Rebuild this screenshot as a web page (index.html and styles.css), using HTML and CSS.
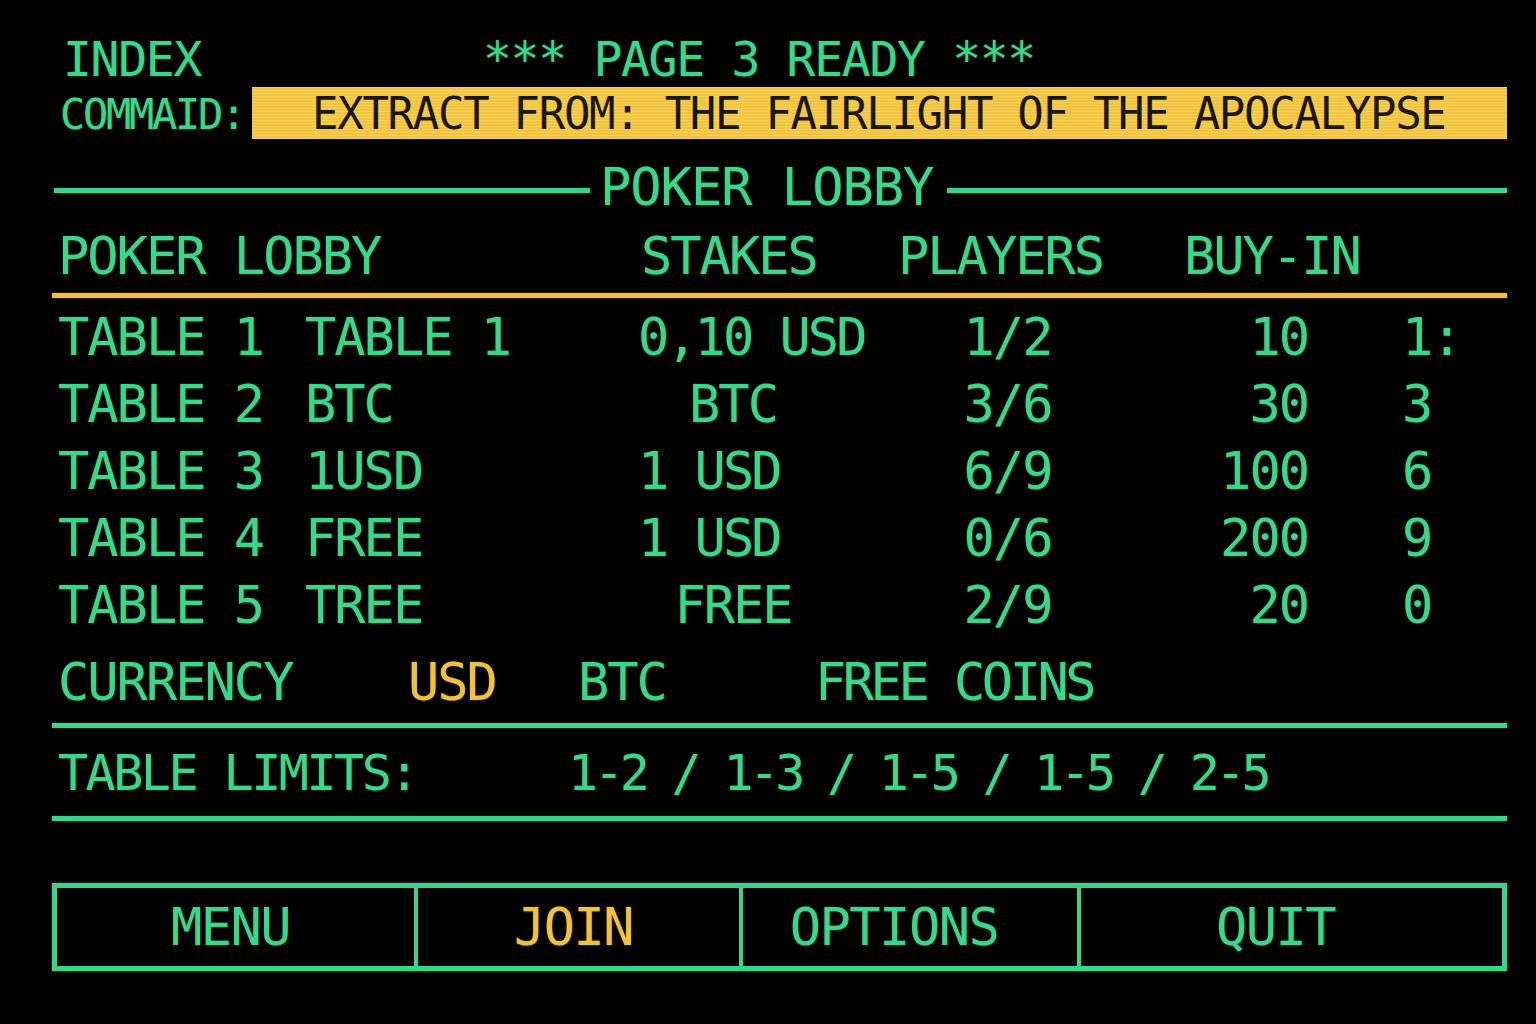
FILE: index.html
```html
<html lang="en">
  <head>
    <meta charset="UTF-8" />
    <meta name="viewport" content="width=device-width, initial-scale=1.0" />
    <title>Poker Lobby</title>

    <link rel="stylesheet" href="styles.css">
  </head>

  <body>
    <div class="screen">
      <div class="topLine">
        <span class="index">INDEX</span>
        <span class="pageTitle">*** PAGE 3 READY ***</span>
      </div>

      <div class="commandLine">
        <span class="commandLabel">COMMAID:</span>
        <div class="commandBar">EXTRACT FROM: THE FAIRLIGHT OF THE APOCALYPSE</div>
      </div>

      <div class="divider">
        <div class="rule ruleLeft"></div>
        <span class="dividerTitle">POKER LOBBY</span>
        <div class="rule ruleRight"></div>
      </div>

      <div class="headerRow">
        <span>POKER LOBBY</span>
        <span>STAKES</span>
        <span>PLAYERS</span>
        <span>BUY-IN</span>
      </div>
      <div class="rule yellowRule"></div>

      <div class="tableList">
        <div class="tableRow">
          <span>TABLE 1</span>
          <span>TABLE 1</span>
          <span class="stakes stakesLeft">0,10 USD</span>
          <span class="players">1/2</span>
          <span class="buyIn">10</span>
          <span class="seats">1:</span>
        </div>
        <div class="tableRow">
          <span>TABLE 2</span>
          <span>BTC</span>
          <span class="stakes">BTC</span>
          <span class="players">3/6</span>
          <span class="buyIn">30</span>
          <span class="seats">3</span>
        </div>
        <div class="tableRow">
          <span>TABLE 3</span>
          <span>1USD</span>
          <span class="stakes stakesLeft">1 USD</span>
          <span class="players">6/9</span>
          <span class="buyIn">100</span>
          <span class="seats">6</span>
        </div>
        <div class="tableRow">
          <span>TABLE 4</span>
          <span>FREE</span>
          <span class="stakes stakesLeft">1 USD</span>
          <span class="players">0/6</span>
          <span class="buyIn">200</span>
          <span class="seats">9</span>
        </div>
        <div class="tableRow">
          <span>TABLE 5</span>
          <span>TREE</span>
          <span class="stakes">FREE</span>
          <span class="players">2/9</span>
          <span class="buyIn">20</span>
          <span class="seats">0</span>
        </div>
      </div>

      <div class="currencyRow">
        <span>CURRENCY</span>
        <span class="active">USD</span>
        <span>BTC</span>
        <span>FREE COINS</span>
      </div>
      <div class="rule greenRule"></div>

      <div class="limitsRow">
        <span class="limitsLabel">TABLE LIMITS:</span>
        <span class="limitsValue">1-2 / 1-3 / 1-5 / 1-5 / 2-5</span>
      </div>
      <div class="rule greenRule limitsRule"></div>

      <div class="buttonBar">
        <div class="button">MENU</div>
        <div class="button active">JOIN</div>
        <div class="button shifted">OPTIONS</div>
        <div class="button shifted">QUIT</div>
      </div>
    </div>
  </body>
</html>
```

FILE: styles.css
```css
body {
  margin: 0;
  background-color: #000;
  color: #3ad68a;
  font-family: 'DejaVu Sans Mono', 'Liberation Mono', monospace;
  text-shadow: 0 0 2px rgba(58, 214, 138, 0.45);
}

.screen {
  width: 1536px;
  height: 1024px;
  padding: 34px 29px 0 52px;
  box-sizing: border-box;
}

.topLine {
  display: flex;
  height: 50px;
  line-height: 50px;
  font-size: 48px;
  letter-spacing: -1.3px;
  padding-left: 11px;
}

.pageTitle {
  margin-left: 282px;
}

.commandLine {
  display: flex;
  align-items: center;
  margin-top: 3px;
  height: 52px;
}

.commandLabel {
  font-size: 42px;
  letter-spacing: -2.3px;
  padding-left: 8px;
  width: 192px;
  margin-top: 3px;
}

.commandBar {
  flex: 1;
  height: 52px;
  line-height: 54px;
  padding-left: 60px;
  background-color: #f2c441;
  background-image: repeating-linear-gradient(0deg, rgba(255, 230, 120, 0.35) 0 1px, transparent 1px 3px);
  color: #1b1708;
  text-shadow: none;
  font-size: 44px;
  letter-spacing: -1.3px;
  white-space: nowrap;
}

.rule {
  height: 5px;
  background-color: #38d489;
  box-shadow: 0 0 2px rgba(58, 214, 138, 0.5);
}

.divider {
  display: flex;
  align-items: center;
  margin-top: 23px;
  height: 50px;
  line-height: 50px;
}

.ruleLeft {
  flex: 0 0 536px;
  margin-left: 2px;
  margin-top: 7px;
}

.ruleRight {
  flex: 1;
  margin-top: 7px;
}

.dividerTitle {
  font-size: 52px;
  letter-spacing: -1px;
  margin: 0 14px 0 10px;
}

.headerRow {
  display: grid;
  grid-template-columns: 583px 257px 286px 1fr;
  margin-top: 19px;
  padding-left: 6px;
  height: 50px;
  line-height: 50px;
  font-size: 52px;
  letter-spacing: -2px;
}

.yellowRule {
  margin-top: 12px;
  background-color: #f2c233;
  box-shadow: 0 0 2px rgba(242, 194, 51, 0.5);
}

.tableList {
  margin-top: 6px;
}

.tableRow {
  display: grid;
  grid-template-columns: 247px 315px 250px 275px 163px 1fr;
  padding-left: 6px;
  height: 67px;
  line-height: 67px;
  font-size: 52px;
  letter-spacing: -2px;
  white-space: pre;
}

.stakes {
  text-align: center;
  padding-right: 24px;
}

.stakesLeft {
  text-align: left;
  padding: 0 0 0 18px;
  letter-spacing: -3px;
}

.players {
  text-align: center;
}

.buyIn {
  text-align: right;
}

.seats {
  padding-left: 94px;
}

.currencyRow {
  display: grid;
  grid-template-columns: 350px 170px 237px 1fr;
  margin-top: 18px;
  padding-left: 6px;
  height: 50px;
  line-height: 50px;
  font-size: 52px;
  letter-spacing: -2px;
}

.currencyRow span:last-child {
  letter-spacing: -3.5px;
}

.active {
  color: #f0c13e;
  text-shadow: 0 0 2px rgba(240, 193, 62, 0.45);
}

.greenRule {
  margin-top: 16px;
}

.limitsRow {
  display: grid;
  grid-template-columns: 510px 1fr;
  margin-top: 20px;
  padding-left: 6px;
  height: 50px;
  line-height: 50px;
  font-size: 50px;
  white-space: pre;
}

.limitsLabel {
  letter-spacing: -2.5px;
}

.limitsValue {
  letter-spacing: -4.2px;
}

.limitsRule {
  margin-top: 18px;
}

.buttonBar {
  display: grid;
  grid-template-columns: 357px 325px 338px 1fr;
  margin-top: 62px;
  height: 88px;
  border: 5px solid #38d489;
  box-sizing: border-box;
  box-shadow: 0 0 2px rgba(58, 214, 138, 0.5);
}

.button {
  text-align: center;
  line-height: 78px;
  font-size: 52px;
  letter-spacing: -1.5px;
  padding-right: 10px;
  border-left: 4px solid #38d489;
}

.button:first-child {
  border-left: none;
}

.button.shifted {
  padding-right: 32px;
}
```
